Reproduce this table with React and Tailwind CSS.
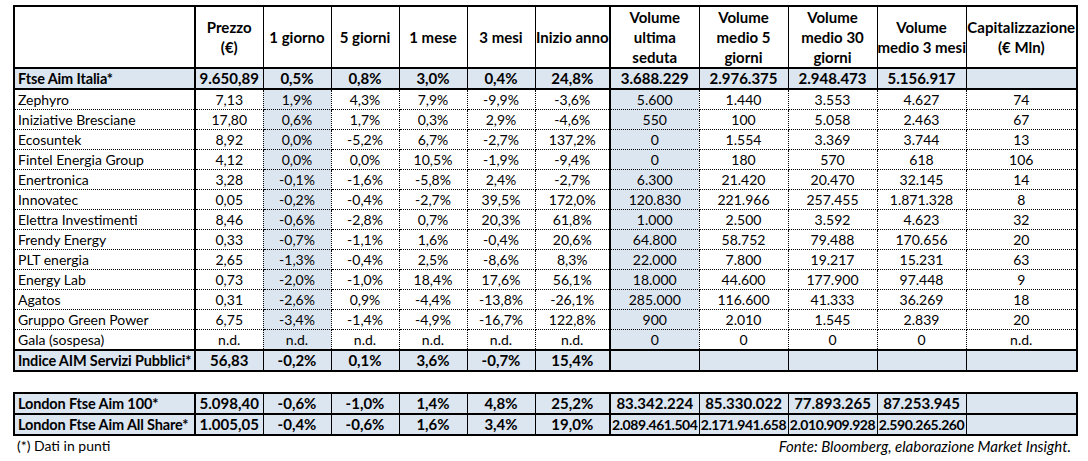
import React from "react";

const L = { thick: "[border-left:2px_solid_#000]", thin: "[border-left:1px_solid_#000]", dot: "[border-left:1px_dotted_#000]" };
const R = { thick: "[border-right:2px_solid_#000]", thin: "[border-right:1px_solid_#000]", dot: "[border-right:1px_dotted_#000]" };
const T = { thick: "[border-top:2px_solid_#000]", thin: "[border-top:1px_solid_#000]", dot: "[border-top:1px_dotted_#000]" };
const B = { thick: "[border-bottom:2px_solid_#000]", thin: "[border-bottom:1px_solid_#000]", dot: "[border-bottom:1px_dotted_#000]" };

const COLW = ["w-[181px]", "w-[68px]", "w-[68px]", "w-[68px]", "w-[68px]", "w-[68px]", "w-[75px]", "w-[89px]", "w-[89px]", "w-[89px]", "w-[89px]", "w-[111px]"];

function vType(b, kind) {
  if (b === 0 || b === 1 || b === 7 || b === 12) return "thick";
  if (kind === "body") return "dot";
  return "thin";
}

function cellCls(c, kind, top, bottom) {
  return [L[vType(c, kind)], R[vType(c + 1, kind)], T[top], B[bottom]].join(" ");
}

const header = [
  [""],
  ["Prezzo", "(€)"],
  ["1 giorno"],
  ["5 giorni"],
  ["1 mese"],
  ["3 mesi"],
  ["Inizio anno"],
  ["Volume", "ultima", "seduta"],
  ["Volume", "medio 5", "giorni"],
  ["Volume", "medio 30", "giorni"],
  ["Volume", "medio 3 mesi"],
  ["Capitalizzazione", "(€ Mln)"],
];

const ftse = ["Ftse Aim Italia*", "9.650,89", "0,5%", "0,8%", "3,0%", "0,4%", "24,8%", "3.688.229", "2.976.375", "2.948.473", "5.156.917", ""];

const body = [
  ["Zephyro", "7,13", "1,9%", "4,3%", "7,9%", "-9,9%", "-3,6%", "5.600", "1.440", "3.553", "4.627", "74"],
  ["Iniziative Bresciane", "17,80", "0,6%", "1,7%", "0,3%", "2,9%", "-4,6%", "550", "100", "5.058", "2.463", "67"],
  ["Ecosuntek", "8,92", "0,0%", "-5,2%", "6,7%", "-2,7%", "137,2%", "0", "1.554", "3.369", "3.744", "13"],
  ["Fintel Energia Group", "4,12", "0,0%", "0,0%", "10,5%", "-1,9%", "-9,4%", "0", "180", "570", "618", "106"],
  ["Enertronica", "3,28", "-0,1%", "-1,6%", "-5,8%", "2,4%", "-2,7%", "6.300", "21.420", "20.470", "32.145", "14"],
  ["Innovatec", "0,05", "-0,2%", "-0,4%", "-2,7%", "39,5%", "172,0%", "120.830", "221.966", "257.455", "1.871.328", "8"],
  ["Elettra Investimenti", "8,46", "-0,6%", "-2,8%", "0,7%", "20,3%", "61,8%", "1.000", "2.500", "3.592", "4.623", "32"],
  ["Frendy Energy", "0,33", "-0,7%", "-1,1%", "1,6%", "-0,4%", "20,6%", "64.800", "58.752", "79.488", "170.656", "20"],
  ["PLT energia", "2,65", "-1,3%", "-0,4%", "2,5%", "-8,6%", "8,3%", "22.000", "7.800", "19.217", "15.231", "63"],
  ["Energy Lab", "0,73", "-2,0%", "-1,0%", "18,4%", "17,6%", "56,1%", "18.000", "44.600", "177.900", "97.448", "9"],
  ["Agatos", "0,31", "-2,6%", "0,9%", "-4,4%", "-13,8%", "-26,1%", "285.000", "116.600", "41.333", "36.269", "18"],
  ["Gruppo Green Power", "6,75", "-3,4%", "-1,4%", "-4,9%", "-16,7%", "122,8%", "900", "2.010", "1.545", "2.839", "20"],
  ["Gala (sospesa)", "n.d.", "n.d.", "n.d.", "n.d.", "n.d.", "n.d.", "0", "0", "0", "0", "n.d."],
];

const indice = ["Indice AIM Servizi Pubblici*", "56,83", "-0,2%", "0,1%", "3,6%", "-0,7%", "15,4%", "", "", "", "", ""];

const london = [
  ["London Ftse Aim 100*", "5.098,40", "-0,6%", "-1,0%", "1,4%", "4,8%", "25,2%", "83.342.224", "85.330.022", "77.893.265", "87.253.945", ""],
  ["London Ftse Aim All Share*", "1.005,05", "-0,4%", "-0,6%", "1,6%", "3,4%", "19,0%", "2.089.461.504", "2.171.941.658", "2.010.909.928", "2.590.265.260", ""],
];

function Cols() {
  return (
    <colgroup>
      {COLW.map((w, i) => (
        <col key={i} className={w} />
      ))}
    </colgroup>
  );
}

function SummaryRow({ row }) {
  return (
    <tr className="h-[20px]">
      {row.map((v, c) => {
        const long = c > 0 && v.length > 12;
        let size = "text-[15px]";
        if (c === 0) size = "text-[14.5px] tracking-[-0.15px] text-left pl-[3px]";
        else if (long) size = "text-[14px] tracking-[-0.45px] text-center";
        else size = "text-[15px] text-center";
        return (
          <td
            key={c}
            className={`${cellCls(c, "sum", "thick", "thick")} bg-[#dce6f1] font-bold p-0 align-bottom whitespace-nowrap overflow-hidden ${size}`}
          >
            {v}
          </td>
        );
      })}
    </tr>
  );
}

export default function App() {
  return (
    <div className="pl-[13px] pt-[5px] font-['Lato',sans-serif] text-[14px] leading-[19px] text-black bg-white">
      <table className="table-fixed border-collapse w-[1064px]">
        <Cols />
        <thead>
          <tr className="h-[60px]">
            {header.map((lines, c) => (
              <th
                key={c}
                className={`${cellCls(c, "head", "thick", "thick")} font-bold text-[15px] text-center align-middle p-0 leading-[20px] whitespace-nowrap`}
              >
                {lines.map((l, i) => (
                  <div key={i}>{l || "\u00a0"}</div>
                ))}
              </th>
            ))}
          </tr>
        </thead>
        <tbody>
          <SummaryRow row={ftse} />
          {body.map((row, r) => (
            <tr key={r} className="h-[20px]">
              {row.map((v, c) => (
                <td
                  key={c}
                  className={`${cellCls(c, "body", "dot", "dot")} ${c === 2 || c === 7 ? "bg-[#dce6f1]" : "bg-white"} p-0 align-bottom whitespace-nowrap ${c === 0 ? "text-left pl-[3px]" : "text-center"}`}
                >
                  {v}
                </td>
              ))}
            </tr>
          ))}
          <SummaryRow row={indice} />
        </tbody>
      </table>

      <table className="table-fixed border-collapse w-[1064px] mt-[20px]">
        <Cols />
        <tbody>
          {london.map((row, r) => (
            <SummaryRow key={r} row={row} />
          ))}
        </tbody>
      </table>

      <div className="flex w-[1064px] justify-between leading-[20px]">
        <span className="pl-[4px]">(*) Dati in punti</span>
        <span className="italic text-[15px] pr-[6px]">Fonte: Bloomberg, elaborazione Market Insight.</span>
      </div>
    </div>
  );
}
